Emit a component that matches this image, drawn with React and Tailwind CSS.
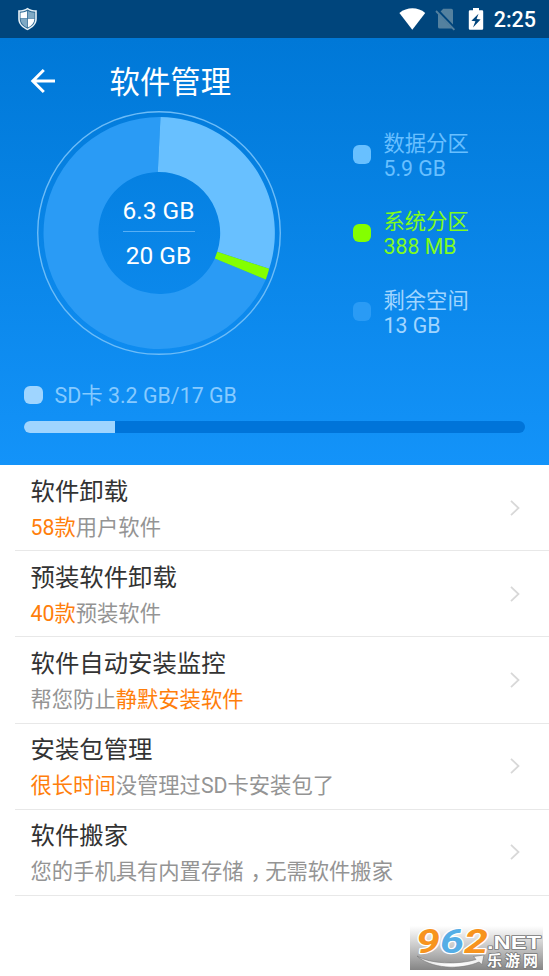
const PARTITIONS = [
  { name: '数据分区', size: '5.9 GB', dot: 'bg-[#68c0ff]', text: 'text-[#68bfff]' },
  { name: '系统分区', size: '388 MB', dot: 'bg-[#84ff00]', text: 'text-[#80fb1c]' },
  { name: '剩余空间', size: '13 GB', dot: 'bg-[#2a9bf5]', text: 'text-[#a0d5ff]' },
];

const ITEMS = [
  { title: '软件卸载', parts: [{ text: '58款', hot: true }, { text: '用户软件' }] },
  { title: '预装软件卸载', parts: [{ text: '40款', hot: true }, { text: '预装软件' }] },
  { title: '软件自动安装监控', parts: [{ text: '帮您防止' }, { text: '静默安装软件', hot: true }] },
  { title: '安装包管理', parts: [{ text: '很长时间', hot: true }, { text: '没管理过SD卡安装包了' }] },
  {
    title: '软件搬家',
    parts: [{ text: '您的手机具有内置存储' }, { text: '，', comma: true }, { text: '无需软件搬家' }],
  },
];

function StatusBar() {
  return (
    <div className="flex h-[38px] items-center bg-[#00457c] pl-[17px] pr-[13px]">
      <svg className="h-6 w-[21px]" viewBox="0 0 21 24">
        <path d="M10.5 0.8 C8 2.8 4 3.4 1.2 3.3 V12 C1.2 17 5 20.7 10.5 23.2 C16 20.7 19.8 17 19.8 12 V3.3 C17 3.4 13 2.8 10.5 0.8Z" fill="#e6f1f7" />
        <path d="M10.5 2.6 C8 4.2 5 4.8 2.8 4.8 V12 C2.8 16.4 5.8 19.5 10.5 21.7 C15.2 19.5 18.2 16.4 18.2 12 V4.8 C16 4.8 13 4.2 10.5 2.6Z" fill="#2f6a94" />
        <path d="M10.1 4 C8 5.2 5.8 5.6 3.5 5.7 V11.2 H10.1Z" fill="#fff" />
        <path d="M10.9 4 C13 5.2 15.2 5.6 17.5 5.7 V11.2 H10.9Z" fill="#7fa9c4" />
        <path d="M10.1 11.8 H3.5 C3.7 15.8 6.2 18.8 10.1 20.6Z" fill="#7fa9c4" />
        <path d="M10.9 11.8 H17.5 C17.3 15.8 14.8 18.8 10.9 20.6Z" fill="#fff" />
      </svg>
      <svg className="ml-auto h-6 w-[27px]" viewBox="0 0 27 24">
        <path d="M0.4 6 C8 -0.2 19 -0.2 26.2 6 L13.3 22.8Z" fill="#fff" />
      </svg>
      <svg className="ml-[9px] h-6 w-[21px]" viewBox="0 0 21 24">
        <path d="M8.2 1.8 H16.3 Q18 1.8 18 3.5 V17.6 L5.6 4.6Z M3 6.8 L17.2 21.6 H4.7 Q3 21.6 3 19.9Z" fill="#54819f" />
        <path d="M1 4 L19.4 22.8" stroke="#54819f" strokeWidth="1.8" />
      </svg>
      <svg className="ml-3 h-6 w-[16px]" viewBox="0 0 16 24">
        <path d="M5 1 H11 V3.2 H14 Q15.2 3.2 15.2 4.4 V21.6 Q15.2 22.8 14 22.8 H2 Q0.8 22.8 0.8 21.6 V4.4 Q0.8 3.2 2 3.2 H5Z" fill="#fff" />
        <path d="M10.5 6.8 L3.4 13.8 L7.4 14.2 L5 20.6 L12.6 12.6 L8.6 12Z" fill="#00457c" />
      </svg>
      <span className="ml-[10px] pt-[2px] text-[21.5px] font-medium leading-6 text-white">2:25</span>
    </div>
  );
}

// Storage donut: used data, system partition and free space
function StorageChart() {
  return (
    <div className="relative h-[246px] w-[246px] shrink-0">
      <svg className="h-full w-full" viewBox="35.5 110.2 246 246">
        <circle cx="158.5" cy="233.2" r="121.3" fill="none" stroke="#6dbcf7" strokeWidth="1.4" />
        <path
          d="M160 117.2 A116 116 0 1 0 265.3 279.7 L214.3 258.7 A61 61 0 1 1 157.3 172.2Z"
          fill="#2a9bf5"
        />
        <path
          d="M160 117.2 A116 116 0 0 1 268.7 269 L216.7 252 A61 61 0 0 0 157.3 172.2Z"
          fill="#68c0ff"
        />
        <path d="M268.7 269 A116 116 0 0 1 265.3 279.7 L214.3 258.7 L216.7 252Z" fill="#84ff00" />
      </svg>
      <div className="absolute inset-0 flex flex-col items-center justify-center text-[24.5px] leading-[30px] text-white">
        <span className="pb-[5px]">6.3 GB</span>
        <span className="h-px w-[72px] bg-[#57aff5]" />
        <span className="pt-[9px]">20 GB</span>
      </div>
    </div>
  );
}

function Header() {
  return (
    <header className="flex h-[427px] flex-col bg-linear-to-b from-[#0078d7] to-[#1393f9]">
      <div className="flex h-[72px] items-center pl-[29.5px] pt-[13px]">
        <svg className="h-[26px] w-[26px]" viewBox="0 0 26 26" fill="none" stroke="#fff" strokeWidth="3">
          <path d="M25 13 H3 M13.8 2 L2.8 13 L13.8 24" />
        </svg>
        <h1 className="ml-[54px] pt-[4px] text-[30.4px] leading-9 text-white">软件管理</h1>
      </div>
      <div className="flex pl-[35.5px]">
        <StorageChart />
        <ul className="ml-[71px] flex flex-col gap-[28.5px] pt-[20.5px]">
          {PARTITIONS.map((p) => (
            <li key={p.name} className="flex items-center">
              <span className={`-mt-[2px] h-[18.5px] w-[18.5px] rounded-[6px] ${p.dot}`} />
              <span className={`ml-[12.5px] text-[21.3px] leading-[25px] ${p.text}`}>
                {p.name}
                <br />
                {p.size}
              </span>
            </li>
          ))}
        </ul>
      </div>
      <div className="mt-[26px] flex items-center pl-6 text-[21.4px] leading-[26px] text-[#86caff]">
        <span className="-mt-px h-[18.5px] w-[18.5px] rounded-[6px] bg-[#9fd5ff]" />
        <span className="ml-[12px] pt-px">SD卡 3.2 GB/17 GB</span>
      </div>
      <div className="ml-6 mr-6 mt-[12px] h-3 overflow-hidden rounded-full bg-[#0074d9]">
        <div className="h-full w-[91px] bg-[#9fd5ff]" />
      </div>
    </header>
  );
}

function ListItem({ title, parts }) {
  return (
    <li className="ml-[15px] flex h-[86.2px] items-center border-b border-[#e8e8e8] pl-[15.5px] pr-[28px]">
      <div className="flex-1 pt-[4px]">
        <h2 className="text-[24.4px] leading-9 text-[#333]">{title}</h2>
        <p className="text-[21.3px] leading-[36px] text-[#949494]">
          {parts.map((part) => (
            <span
              key={part.text}
              className={
                part.hot
                  ? 'text-[#ff7e0b]'
                  : part.comma
                    ? "ml-[7px] mr-[4px] [font-feature-settings:'halt']"
                    : undefined
              }
            >
              {part.text}
            </span>
          ))}
        </p>
      </div>
      <svg className="h-[18px] w-3" viewBox="0 0 12 18" fill="none" stroke="#d8d8d8" strokeWidth="1.8">
        <path d="M2 1.8 L9.5 9 L2 16.2" />
      </svg>
    </li>
  );
}

function SiteBadge() {
  return (
    <svg className="ml-auto mr-[6px] h-[44px] w-[133px] overflow-visible" viewBox="0 0 133 44">
      <defs>
        <linearGradient id="badge-bg" x1="0" y1="0" x2="0" y2="1">
          <stop offset="0" stopColor="#fff" />
          <stop offset="0.5" stopColor="#c4c4c4" />
          <stop offset="1" stopColor="#858585" />
        </linearGradient>
        <linearGradient id="badge-swoosh" x1="0" y1="0" x2="1" y2="0">
          <stop offset="0" stopColor="#ddd" />
          <stop offset="0.5" stopColor="#fff" />
          <stop offset="1" stopColor="#eee" />
        </linearGradient>
      </defs>
      <rect width="133" height="44" fill="url(#badge-bg)" />
      <path
        d="M7 30 C20 38 48 39 66 33.5 L63.5 30.5 L74 29 L72 38.5 L69 36 C50 44.5 20 42.5 7 30Z"
        fill="url(#badge-swoosh)"
        stroke="#777"
        strokeWidth="0.6"
      />
      <g
        className="font-[Roboto] text-[34px] font-bold italic"
        stroke="#fff"
        strokeWidth="2.4"
        paintOrder="stroke"
        strokeLinejoin="round"
      >
        <text x="6" y="27" textLength="24" lengthAdjust="spacingAndGlyphs" fill="#f7941e">9</text>
        <text x="30" y="27" textLength="24" lengthAdjust="spacingAndGlyphs" fill="#55aee6">6</text>
        <text x="54" y="27" textLength="24" lengthAdjust="spacingAndGlyphs" fill="#f7941e">2</text>
      </g>
      <g fill="#fff" stroke="#777" strokeWidth="1.6" paintOrder="stroke" strokeLinejoin="round" className="font-bold">
        <text x="77" y="23" textLength="54" lengthAdjust="spacingAndGlyphs" className="font-['Liberation_Sans'] text-[18.5px]">
          .NET
        </text>
        <text x="77" y="39.5" textLength="51" className="font-['Noto_Sans_CJK_SC'] text-[15px]">
          乐游网
        </text>
      </g>
    </svg>
  );
}

export default function App() {
  return (
    <div className="flex h-[976px] w-[549px] flex-col overflow-hidden bg-white font-[Roboto,'Noto_Sans_CJK_SC',sans-serif]">
      <StatusBar />
      <Header />
      <ul>
        {ITEMS.map((item) => (
          <ListItem key={item.title} {...item} />
        ))}
      </ul>
      <div className="mt-auto pb-[6px]">
        <SiteBadge />
      </div>
    </div>
  );
}
